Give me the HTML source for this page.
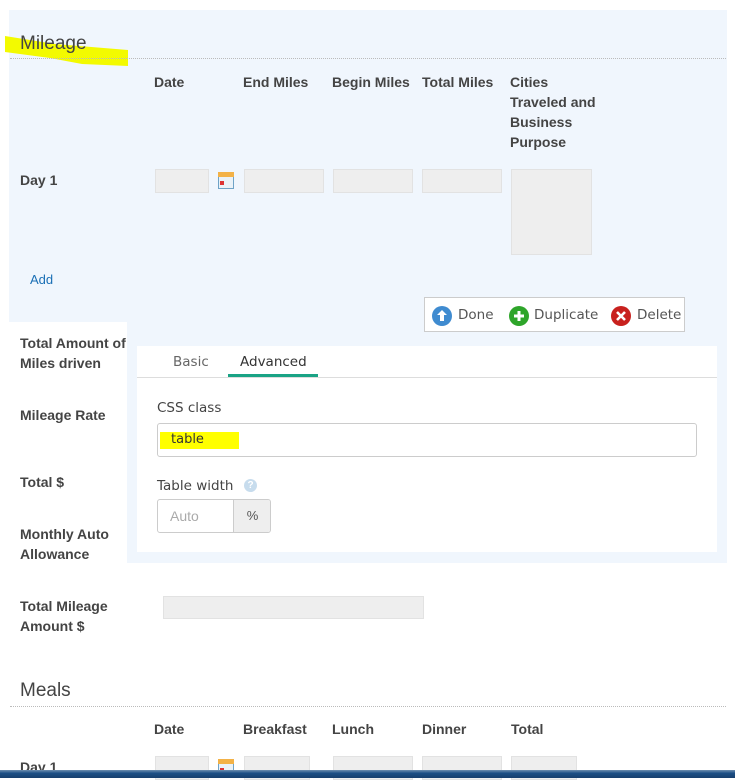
<!DOCTYPE html>
<html><head><meta charset="utf-8"><style>
*{box-sizing:border-box;margin:0;padding:0}
body{width:735px;height:778px;background:#fff;position:relative;overflow:hidden;font-family:"Liberation Sans",Arial,sans-serif;color:#444}
.a{position:absolute}
.h{font-size:14px;font-weight:bold;color:#444;line-height:20px}
.in{position:absolute;background:#eee;border:1px solid #e2e2e2}
.cal{position:absolute;width:16px;height:17px;border:1px solid #6fa3c7;background:#eaf2f8}
.cal:before{content:"";position:absolute;left:-1px;right:-1px;top:-1px;height:5px;background:#f3b247}
.cal:after{content:"";position:absolute;left:1px;top:8px;width:4px;height:4px;background:#d33}
.lbl{font-family:"DejaVu Sans",sans-serif;font-size:13.5px;color:#444}
</style></head><body>
<div class="a" style="left:9px;top:10px;width:718px;height:312px;background:#f0f6fd"></div>
<svg class="a" style="left:0;top:0" width="140" height="70"><polygon points="5,36 55,44 128,50 128,66 82,64 50,58 5,52" fill="#f3fa00"/></svg>
<div class="a" style="left:20px;top:33px;font-size:19px;color:#444">Mileage</div>
<div class="a" style="left:10px;top:58px;width:716px;border-top:1px dotted #bbb"></div>
<div class="a h" style="left:154px;top:72px">Date</div>
<div class="a h" style="left:243px;top:72px">End Miles</div>
<div class="a h" style="left:332px;top:72px">Begin Miles</div>
<div class="a h" style="left:422px;top:72px">Total Miles</div>
<div class="a h" style="left:510px;top:72px">Cities<br>Traveled and<br>Business<br>Purpose</div>
<div class="a h" style="left:20px;top:170px">Day 1</div>
<div class="in" style="left:155px;top:169px;width:54px;height:24px"></div>
<div class="cal" style="left:218px;top:172px"></div>
<div class="in" style="left:244px;top:169px;width:80px;height:24px"></div>
<div class="in" style="left:333px;top:169px;width:80px;height:24px"></div>
<div class="in" style="left:422px;top:169px;width:80px;height:24px"></div>
<div class="in" style="left:511px;top:169px;width:81px;height:86px"></div>
<div class="a" style="left:30px;top:272px;font-size:13px;color:#1a6fb5">Add</div>
<div class="a h" style="left:20px;top:333px;white-space:nowrap">Total Amount of<br>Miles driven</div>
<div class="a h" style="left:20px;top:405px">Mileage Rate</div>
<div class="a h" style="left:20px;top:472px">Total $</div>
<div class="a h" style="left:20px;top:524px">Monthly Auto<br>Allowance</div>
<div class="a" style="left:127px;top:322px;width:600px;height:241px;background:#f0f6fd"></div>
<div class="a" style="left:424px;top:297px;width:261px;height:35px;background:#fff;border:1px solid #ccc"></div>
<svg class="a" style="left:432px;top:305px" width="250" height="22">
<circle cx="10" cy="11" r="10" fill="#3f8bd0"/><path d="M10 5l-5 5h3v6h4v-6h3z" fill="#fff"/>
<circle cx="87" cy="11" r="10" fill="#2ea52a"/><path d="M87 6v10M82 11h10" stroke="#fff" stroke-width="3"/>
<circle cx="189" cy="11" r="10" fill="#c8211e"/><path d="M185 7l8 8M193 7l-8 8" stroke="#fff" stroke-width="2.6"/>
</svg>
<div class="a lbl" style="left:458px;top:307px;color:#555">Done</div>
<div class="a lbl" style="left:534px;top:307px;color:#555">Duplicate</div>
<div class="a lbl" style="left:637px;top:307px;color:#555">Delete</div>
<div class="a" style="left:137px;top:346px;width:580px;height:206px;background:#fff"></div>
<div class="a" style="left:137px;top:377px;width:580px;border-top:1px solid #ddd"></div>
<div class="a lbl" style="left:173px;top:354px;color:#666">Basic</div>
<div class="a lbl" style="left:240px;top:354px;color:#333">Advanced</div>
<div class="a" style="left:228px;top:374px;width:90px;height:3px;background:#1aa385"></div>
<div class="a lbl" style="left:157px;top:400px;color:#444">CSS class</div>
<div class="a" style="left:157px;top:423px;width:540px;height:34px;border:1px solid #ccc;border-radius:3px"></div>
<div class="a" style="left:160px;top:432px;width:79px;height:17px;background:#ffff00"></div>
<div class="a lbl" style="left:171px;top:432px;color:#333;font-size:13px">table</div>
<div class="a lbl" style="left:157px;top:478px;color:#444">Table width</div>
<div class="a" style="left:244px;top:479px;width:13px;height:13px;border-radius:50%;background:#c7dced;color:#fff;font-size:10px;text-align:center;line-height:13px;font-weight:bold">?</div>
<div class="a" style="left:157px;top:499px;width:114px;height:34px;border:1px solid #ccc;border-radius:3px;overflow:hidden">
<div class="a" style="left:75px;top:0;width:38px;height:32px;background:#eee;border-left:1px solid #ccc;text-align:center;line-height:32px;font-size:13px;color:#555">%</div>
<div class="a" style="left:12px;top:8px;font-size:14px;color:#aaa">Auto</div></div>
<div class="a h" style="left:20px;top:596px">Total Mileage<br>Amount $</div>
<div class="in" style="left:163px;top:596px;width:261px;height:23px"></div>
<div class="a" style="left:20px;top:680px;font-size:19px;color:#444">Meals</div>
<div class="a" style="left:10px;top:706px;width:716px;border-top:1px dotted #bbb"></div>
<div class="a h" style="left:154px;top:719px">Date</div>
<div class="a h" style="left:243px;top:719px">Breakfast</div>
<div class="a h" style="left:332px;top:719px">Lunch</div>
<div class="a h" style="left:422px;top:719px">Dinner</div>
<div class="a h" style="left:511px;top:719px">Total</div>
<div class="a h" style="left:20px;top:757px">Day 1</div>
<div class="in" style="left:155px;top:756px;width:54px;height:24px"></div>
<div class="cal" style="left:218px;top:759px"></div>
<div class="in" style="left:244px;top:756px;width:66px;height:24px"></div>
<div class="in" style="left:333px;top:756px;width:80px;height:24px"></div>
<div class="in" style="left:422px;top:756px;width:80px;height:24px"></div>
<div class="in" style="left:511px;top:756px;width:66px;height:24px"></div>
<div class="a" style="left:0;top:770px;width:735px;height:8px;background:linear-gradient(#6f8fb0,#1d4f86 40%,#173f6e)"></div>
</body></html>
